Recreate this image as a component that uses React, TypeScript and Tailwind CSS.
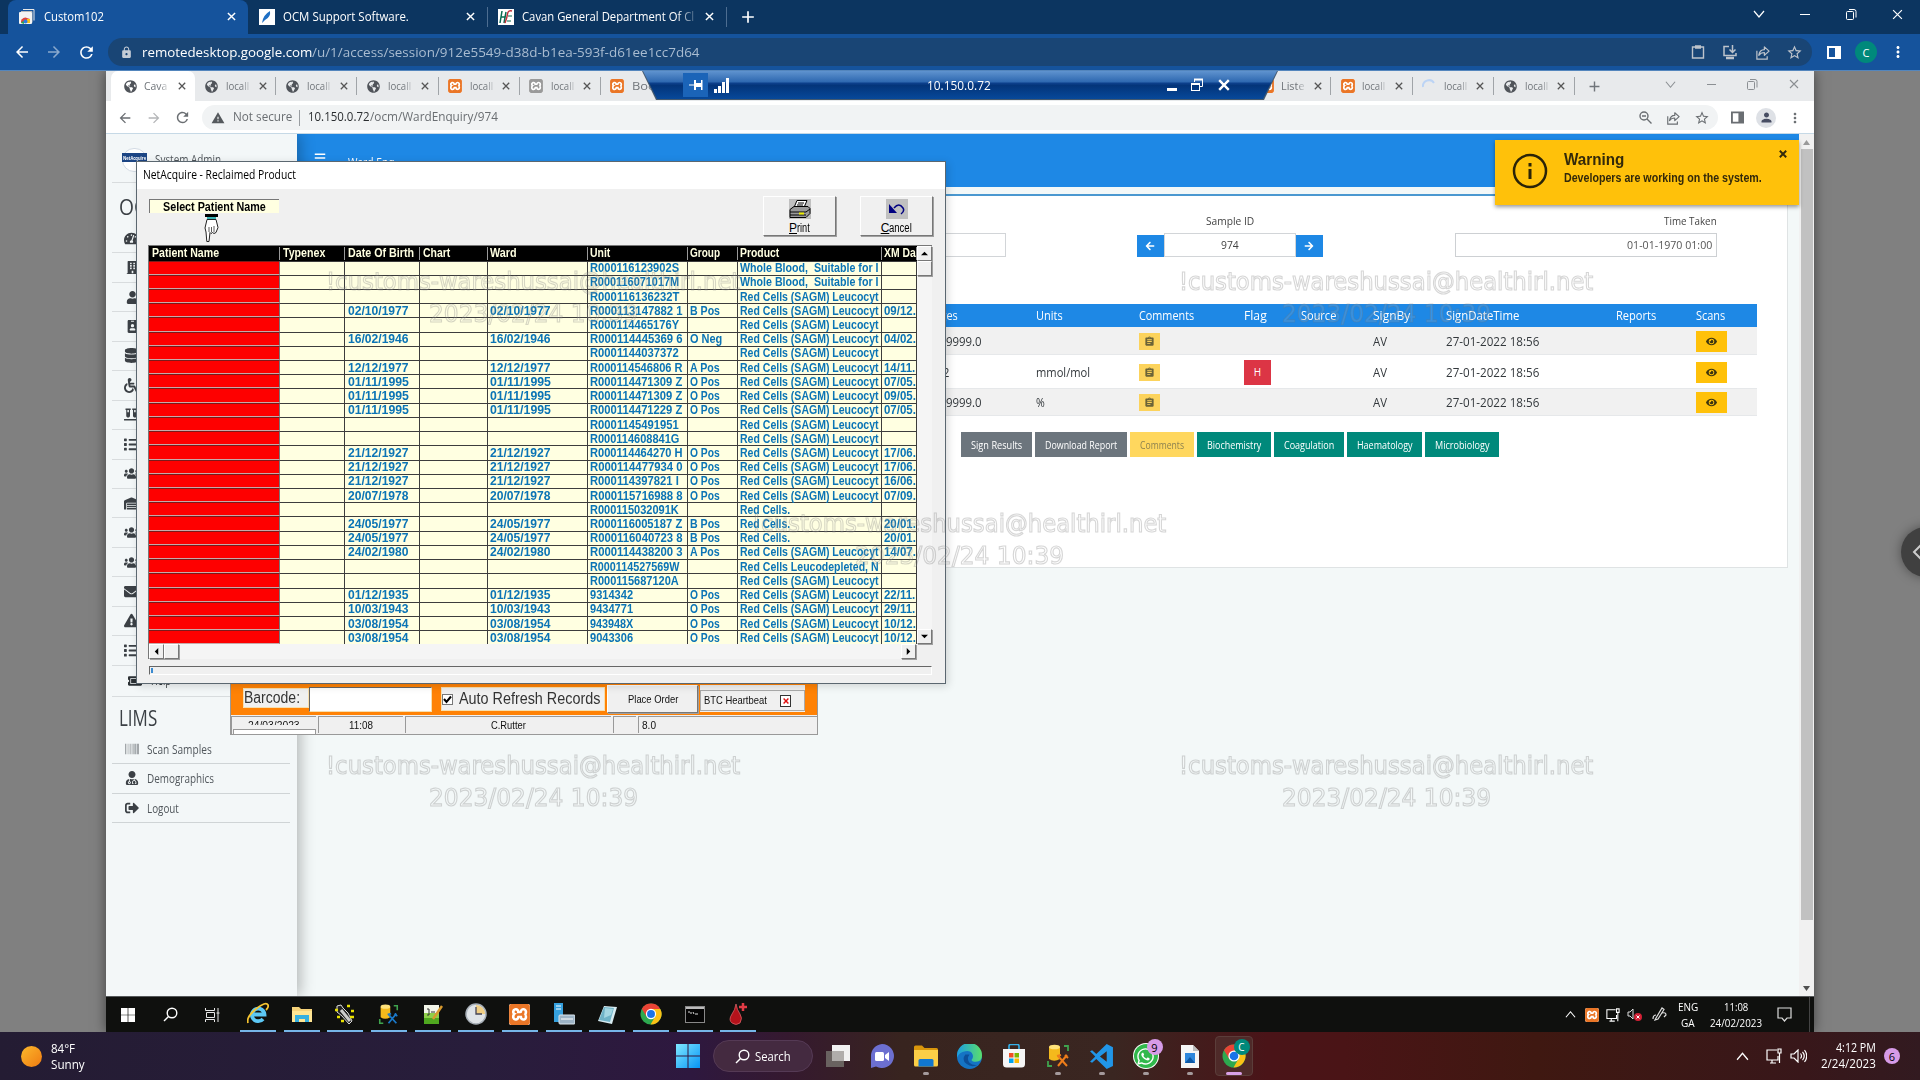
import React, { useLayoutEffect, useRef, useState } from "react";
import {
  FaArrowLeft, FaArrowRight, FaBarcode, FaBars, FaBuilding, FaDatabase, FaEnvelope, FaExclamationTriangle,
  FaEye, FaGlobeAmericas, FaIdBadge, FaList, FaSignOutAlt, FaTachometerAlt, FaUser, FaUserMd, FaUsers, FaVials, FaWarehouse,
  FaWheelchair, FaWhatsapp, FaTicketAlt,
} from "react-icons/fa";
import { MdAdd, MdArrowBack, MdArrowForward, MdAssignment, MdLock, MdMoreVert, MdPerson, MdRefresh, MdStarBorder, MdWarning } from "react-icons/md";
import { SiXampp } from "react-icons/si";

/** Text squeezed or stretched horizontally to an exact width. */
function Fit({ w, children, className = "" }: { w: number; children: string; className?: string }) {
  const ref = useRef<HTMLSpanElement>(null);
  const [k, setK] = useState(1);
  useLayoutEffect(() => {
    if (ref.current) setK(w / ref.current.offsetWidth);
  }, [w, children]);
  return (
    <span className={`inline-block shrink-0 ${className}`} style={{ width: w }}>
      <span ref={ref} className="inline-block origin-left whitespace-pre" style={{ transform: `scaleX(${k})` }}>
        {children}
      </span>
    </span>
  );
}

function Slot({ w, children, className = "" }: { w: number; children?: React.ReactNode; className?: string }) {
  return (
    <div className={`flex shrink-0 items-center justify-center ${className}`} style={{ width: w }}>
      {children}
    </div>
  );
}

/* ---------- small icons ---------- */
const Cross = ({ s = 9, c = "currentColor", sw = 1.6 }: { s?: number; c?: string; sw?: number }) => (
  <svg width={s} height={s} viewBox="0 0 10 10" fill="none" stroke={c} strokeWidth={sw}><path d="M1 1l8 8M9 1l-8 8" /></svg>
);
const Chevron = ({ up = false, s = 12 }: { up?: boolean; s?: number }) => (
  <svg width={s} height={s} viewBox="0 0 12 12" fill="none" stroke="currentColor" strokeWidth="1.2">
    <path d={up ? "M1 9l5-6 5 6" : "M1 3l5 6 5-6"} />
  </svg>
);
const Restore = () => (
  <svg width="11" height="11" viewBox="0 0 11 11" fill="none" stroke="currentColor"><rect x=".5" y="2.5" width="7" height="8" rx="1" /><path d="M3 .5h5q2 0 2 2v6" /></svg>
);
const ShareIcon = ({ s = 15 }: { s?: number }) => (
  <svg width={s} height={s} viewBox="0 0 16 16" fill="none" stroke="currentColor" strokeWidth="1.3">
    <path d="M2 6v9h11v-3" /><path d="M4 11q1-6 6-6V2l5 4.5-5 4.500V8q-4 0-6 3z" strokeLinejoin="round" />
  </svg>
);
const ClipIcon = () => (
  <svg width="14" height="16" viewBox="0 0 14 16" fill="none" stroke="currentColor" strokeWidth="1.4"><path d="M1.500 3h11v11h-11z" /><path d="M4 3h6" strokeWidth="3.500" /></svg>
);
const InstallIcon = () => (
  <svg width="16" height="16" viewBox="0 0 16 16" fill="none" stroke="currentColor" strokeWidth="1.5">
    <path d="M7 2.500H2v9h12V9" /><path d="M4 14h8" strokeWidth="2.500" /><path d="M10.500 1v7M7.500 5.500l3 3 3-3" />
  </svg>
);
const SidePanel = ({ w = 14 }: { w?: number }) => (
  <svg width={w} height="13" viewBox="0 0 14 13"><path fill="currentColor" fillRule="evenodd" d="M0 0h14v13H0zM2 2v9h6V2z" /></svg>
);
const ZoomOut = () => (
  <svg width="13" height="13" viewBox="0 0 13 13" fill="none" stroke="currentColor" strokeWidth="1.4"><circle cx="5" cy="5" r="4" /><path d="M8 8l4.500 4.500M3 5h4" /></svg>
);
const Xampp = ({ s = 14, gray = false }: { s?: number; gray?: boolean }) => (
  <span className={`flex items-center justify-center overflow-hidden rounded-[2px] bg-white ${gray ? "text-[#9a9a9a]" : "text-[#ea7627]"}`} style={{ width: s, height: s }}>
    <SiXampp size={s} className="shrink-0" />
  </span>
);
const WinLogo = ({ s, c }: { s: number; c: string }) => (
  <svg width={s} height={s} viewBox="0 0 20 20" fill={c}><path d="M0 0h9.500v9.500H0zM10.500 0H20v9.500h-9.500zM0 10.500h9.500V20H0zM10.500 10.500H20V20h-9.500z" /></svg>
);
const Search = ({ s = 15 }: { s?: number }) => (
  <svg width={s} height={s} viewBox="0 0 15 15" fill="none" stroke="#fff" strokeWidth="1.400"><circle cx="9" cy="6" r="4.800" /><path d="M5.500 9.500L1 14" /></svg>
);
const ChromeLogo = ({ s }: { s: number }) => (
  <svg width={s} height={s} viewBox="0 0 24 24">
    <circle cx="12" cy="12" r="11.500" fill="#2da94f" />
    <path d="M12 12L2 6.300A11.500 11.500 0 0 1 22 6.300z" fill="#ea4335" />
    <path d="M12 6.500h10.100A11.500 11.500 0 0 1 11.500 23.500L17 14z" fill="#fbc116" />
    <path d="M2 6.200l5.200 8.700L12 6.500z" fill="#ea4335" />
    <circle cx="12" cy="12" r="5.600" fill="#fff" /><circle cx="12" cy="12" r="4.300" fill="#1a73e8" />
  </svg>
);
const Folder = ({ s }: { s: number }) => (
  <svg width={s} height={s} viewBox="0 0 24 24">
    <path d="M0 3q0-1.500 1.500-1.500H8L10.500 4H22.500Q24 4 24 5.500V21H0z" fill="#d9960c" /><path d="M0 6h24v15q0 1.500-1.500 1.500h-21Q0 22.500 0 21z" fill="#fbcf47" />
    <path d="M4.500 22.500v-6q0-1.500 1.500-1.500h12q1.500 0 1.500 1.500v6z" fill="#1177cf" />
  </svg>
);
const RemoteFolder = () => (
  <svg width="20" height="20" viewBox="0 0 20 20"><path d="M0 3h7l2 2h11v13H0z" fill="#f6d37a" /><path d="M0 7h20v11H0z" fill="#ffe694" /><path d="M3 18v-7h14v7h-4v-3H7v3z" fill="#35b0e0" /></svg>
);
const DbTool = ({ s, tool }: { s: number; tool: string }) => (
  <svg width={s} height={s} viewBox="0 0 22 24" fill="none">
    <path d="M17 2h4v5M1 17v5h4" stroke="#3fa34d" strokeWidth="1.800" />
    <path d="M2 3v12q5 3.500 11 0V3z" fill="#f4b91c" /><ellipse cx="7.500" cy="3" rx="5.500" ry="2.300" fill="#ffe27a" />
    <path d="M11 12l9 10M20 11l-9 11M10 12l4-1M18 11l3 3" stroke={tool} strokeWidth="2" />
  </svg>
);
const Speaker = () => (
  <svg width="17" height="14" viewBox="0 0 17 14" fill="none" stroke="#fff" strokeWidth="1.200"><path d="M1 5h3l4-4v12L4 9H1z" /><path d="M10.500 4.500q2 2.500 0 5M12.500 2.800q3.500 4.200 0 8.400M14.500 1q4.500 6 0 12" /></svg>
);
const Monitor = ({ s = 16 }: { s?: number }) => (
  <svg width={s} height={s} viewBox="0 0 16 16" fill="none" stroke="#fff" strokeWidth="1.200"><path d="M11 2H1v10h11V8M4 15h6M6 12v3" /><path d="M12 1h3v4h-3zM13.500 5v10" /></svg>
);

/* ---------- outer browser ---------- */
function OuterTabs() {
  return (
    <div className="flex h-[34px] shrink-0 bg-[#0c3560] pl-2 text-[12px] leading-none text-white">
      <div className="flex h-[34px] w-[240px] items-center rounded-t-[8px] bg-[#15539c] pb-[1px]">
        <Slot w={38}>
          <svg width="16" height="15" viewBox="0 0 16 15"><path d="M4 .5h11v11" fill="none" stroke="#e8e8e8" /><path d="M2 2.500h11v11" fill="none" stroke="#bbb" /><rect x="0" y="3" width="13" height="12" rx="1" fill="#f4f4f4" /><path d="M2 14a4.500 4.500 0 0 1 4.500-5.500L11 10z" fill="#e2453b" /><path d="M2 14q1-2 3-2v3z" fill="#2da94f" /><path d="M8 10h3v4H8z" fill="#fbc116" /><circle cx="6.500" cy="12.500" r="2" fill="#2f7de1" /></svg>
        </Slot>
        <Fit w={60} className="-ml-[2px]">Custom102</Fit>
        <div className="ml-auto flex w-[33px] justify-center"><Cross /></div>
      </div>
      <div className="flex w-[239px] items-center pb-[1px]">
        <span className="ml-[11px] flex h-4 w-4 items-center justify-center bg-white">
          <svg width="12" height="13" viewBox="0 0 12 13"><path d="M1 13Q2 5 9 1q1 6-5 9z" fill="#1e6fc4" /></svg>
        </span>
        <Fit w={126} className="ml-2">OCM Support Software.</Fit>
        <div className="ml-auto flex w-[33px] justify-center"><Cross /></div>
      </div>
      <div className="flex w-[239px] items-center pb-[1px]">
        <div className="h-5 w-px bg-[#4d6d91]" />
        <span className="ml-[10px] flex h-4 w-4 items-center justify-center bg-white">
          <svg width="16" height="16" viewBox="0 0 16 16" fill="none"><path d="M4 2L2 14M8 3L6 14M3 8h4" stroke="#0a6b50" strokeWidth="1.500" /><path d="M14 2q-4-1-4.500 3T7 14" stroke="#c22f3a" strokeWidth="1.500" /><path d="M10 7h4M9 12h4" stroke="#0a6b50" strokeWidth="1.200" /></svg>
        </span>
        <div className="ml-2 w-[176px] overflow-hidden [mask-image:linear-gradient(to_right,black_90%,rgba(0,0,0,0.25))]"><Fit w={175}>Cavan General Department Of Cli</Fit></div>
        <div className="ml-auto flex w-[33px] justify-center"><Cross /></div>
      </div>
      <div className="flex items-center pb-[1px]">
        <div className="h-5 w-px bg-[#4d6d91]" />
        <MdAdd className="ml-[11px]" size={20} />
      </div>
      <div className="ml-auto flex pb-[6px]">
        <Slot w={46}><Chevron /></Slot>
        <Slot w={46}><div className="h-px w-[10px] bg-white" /></Slot>
        <Slot w={46}><Restore /></Slot>
        <Slot w={46}><Cross s={11} sw={1.1} /></Slot>
      </div>
    </div>
  );
}

function OuterToolbar() {
  return (
    <div className="flex h-[37px] shrink-0 items-center border-b border-[#5486bd] bg-[#15539c] pl-[6px] text-[13px] leading-none text-white">
      <Slot w={32}><MdArrowBack size={18} /></Slot>
      <Slot w={32}><MdArrowForward size={18} className="opacity-50" /></Slot>
      <Slot w={32}><MdRefresh size={19} /></Slot>
      <div className="ml-[6px] flex h-7 w-[1704px] items-center rounded-full bg-[#194575] pl-[12px] text-[#a9bcd1]">
        <MdLock size={13} className="mr-[9px] text-[#c4ccd6]" />
        <Fit w={170} className="text-white">remotedesktop.google.com</Fit>
        <Fit w={388}>/u/1/access/session/912e5549-d38d-b1ea-593f-d61ee1cc7d64</Fit>
        <div className="ml-auto mr-[2px] flex text-[#bdc3cb]">
          <Slot w={32}><ClipIcon /></Slot>
          <Slot w={32}><InstallIcon /></Slot>
          <Slot w={32}><ShareIcon /></Slot>
          <Slot w={32}><MdStarBorder size={17} /></Slot>
        </div>
      </div>
      <Slot w={44}><SidePanel /></Slot>
      <Slot w={20}><span className="flex h-[22px] w-[22px] shrink-0 items-center justify-center rounded-full bg-[#00897b] text-[11px]">C</span></Slot>
      <Slot w={44}><MdMoreVert size={18} /></Slot>
    </div>
  );
}

/* ---------- remote browser ---------- */
type TabKind = "globe" | "xampp" | "gray" | "spin";
function RemoteTab({ kind, title, active = false }: { kind: TabKind; title: string; active?: boolean }) {
  return (
    <div className={`flex h-[30px] shrink-0 items-center ${active ? "w-[84px] rounded-t-[7px] bg-white" : "w-[81.2px]"}`}>
      <Slot w={active ? 38 : 33}>
        {kind === "globe" && <FaGlobeAmericas size={13} className="text-[#50545a]" />}
        {kind === "xampp" && <Xampp />}
        {kind === "gray" && <Xampp gray />}
        {kind === "spin" && <svg width="14" height="14" viewBox="0 0 14 14" fill="none" stroke="#bcd4f5" strokeWidth="2"><path d="M1 8a6 6 0 0 1 11-4" /></svg>}
      </Slot>
      <div className={`w-6 shrink-0 overflow-hidden [mask-image:linear-gradient(to_right,black_65%,rgba(0,0,0,0.2))] ${active ? "-ml-[5px]" : "-ml-[2px]"}`}>
        <Fit w={23.500}>{title}</Fit>
      </div>
      <div className="flex flex-1 justify-center text-[#555]"><Cross s={8} /></div>
      {!active && <div className="h-[18px] w-px bg-[#a0a4a8]" />}
    </div>
  );
}

function RdpBar() {
  return (
    <div className="absolute left-[536px] top-0 h-[29px] w-[636px] bg-[#44596f] [clip-path:polygon(0_0,100%_0,622px_100%,14px_100%)]">
      <div className="flex h-[28px] items-center bg-[linear-gradient(#5f93cf_0%,#2f69b1_38%,#0c3f8b_44%,#033479_52%,#07489a_100%)] text-white [clip-path:polygon(1px_0,635px_0,621px_100%,15px_100%)]">
        <div className="ml-[41px] flex h-6 w-[25px] items-center justify-center bg-[#1b64b8]">
          <svg width="14" height="12" viewBox="0 0 14 12"><path d="M0 5.500h5v1H0zM5 1h2v3h5V1h1.500v10H12V8H7v3H5z" fill="#fff" /></svg>
        </div>
        <svg className="ml-[6px]" width="15" height="15" viewBox="0 0 15 15" fill="#fff"><path d="M0 11h3v4H0zM4 8h3v7H4zM8 4h3v11H8zM12 0h3v15h-3z" /></svg>
        <Fit w={64} className="ml-[198px] text-[13px] leading-none">10.150.0.72</Fit>
        <div className="ml-[176px] mt-[9px] h-[3px] w-[10px] bg-white" />
        <svg className="ml-[14px]" width="12" height="14" viewBox="0 0 12 14" fill="none" stroke="#fff"><path d="M3.500 4V1.500h8v7H9" /><path d="M3 1.500h9" strokeWidth="2" /><rect x=".5" y="5.500" width="8" height="7" /><path d="M0 6h9" strokeWidth="2" /></svg>
        <div className="ml-[15px]"><Cross s={12} sw={2} /></div>
      </div>
    </div>
  );
}

function RemoteChrome() {
  return (
    <>
      <div className="relative flex h-[30px] shrink-0 items-center bg-[#e8eaec] pl-[5px] text-[11.500px] leading-none text-[#70757a]">
        <RemoteTab kind="globe" title="Cava" active />
        <RemoteTab kind="globe" title="locall" />
        <RemoteTab kind="globe" title="locall" />
        <RemoteTab kind="globe" title="locall" />
        <RemoteTab kind="xampp" title="locall" />
        <RemoteTab kind="gray" title="locall" />
        <RemoteTab kind="xampp" title="Boo" />
        <div className="w-[568px] shrink-0" />
        <RemoteTab kind="xampp" title="Liste" />
        <RemoteTab kind="xampp" title="locall" />
        <RemoteTab kind="spin" title="locall" />
        <RemoteTab kind="globe" title="locall" />
        <Slot w={40}><MdAdd size={17} /></Slot>
        <div className="mb-1 ml-auto flex text-[#8b8f93]">
          <Slot w={41}><Chevron s={11} /></Slot>
          <Slot w={41}><div className="h-px w-[9px] bg-[#8b8f93]" /></Slot>
          <Slot w={41}><Restore /></Slot>
          <Slot w={41}><Cross s={10} sw={1.1} /></Slot>
        </div>
        <RdpBar />
      </div>
      <div className="flex h-[33px] shrink-0 items-center border-b border-[#c6d9e6] bg-white pl-[5px] pt-px text-[12.500px] leading-none text-[#6a6e72]">
        <Slot w={28}><MdArrowBack size={16} /></Slot>
        <Slot w={29}><MdArrowForward size={16} className="opacity-50" /></Slot>
        <Slot w={29}><MdRefresh size={17} /></Slot>
        <div className="ml-[5px] flex h-[25px] w-[1516px] items-center rounded-full bg-[#f1f3f4] pl-[9px]">
          <MdWarning size={14} className="text-[#55595d]" />
          <Fit w={59} className="ml-2">Not secure</Fit>
          <div className="ml-[7px] h-4 w-px bg-[#9a9ea2]" />
          <Fit w={61.5} className="ml-[8px] text-[#2a2d30]">10.150.0.72</Fit>
          <Fit w={128}>/ocm/WardEnquiry/974</Fit>
          <div className="ml-auto mr-[2px] flex">
            <Slot w={28}><ZoomOut /></Slot>
            <Slot w={28.500}><ShareIcon s={14} /></Slot>
            <Slot w={28.500}><MdStarBorder size={16} /></Slot>
          </div>
        </div>
        <Slot w={38}><SidePanel w={13} /></Slot>
        <Slot w={20}><span className="flex h-5 w-5 items-center justify-center rounded-full bg-[#dee1e6] text-[#474d63]"><MdPerson size={15} /></span></Slot>
        <Slot w={38}><MdMoreVert size={16} /></Slot>
      </div>
    </>
  );
}

/* ---------- sidebar ---------- */
const MENU = [
  FaTachometerAlt, FaBuilding, FaUser, FaIdBadge, FaDatabase, FaWheelchair, FaVials, FaList, FaUsers,
  FaWarehouse, FaUsers, FaUsers, FaEnvelope, FaExclamationTriangle, FaList,
];

function Sidebar() {
  const lims: [React.ComponentType<{ size?: number; className?: string }>, string, number][] = [
    [FaBarcode, "Scan Samples", 65], [FaUserMd, "Demographics", 67], [FaSignOutAlt, "Logout", 32],
  ];
  return (
    <div className="z-10 flex w-[191px] shrink-0 flex-col bg-[#f3f7f8] pl-[6px] text-[12px] leading-none text-[#51575c] shadow-[3px_0_14px_rgba(0,0,0,0.28)]">
      <div className="flex h-[49px] w-[178px] items-start border-b border-[#d8dcde] pt-[13px]">
        <div className="ml-[10px] mt-[1px] flex h-6 w-[25px] flex-col items-center rounded-full border border-[#d3dbe4] bg-white">
          <div className="mt-[4px] flex h-[9px] w-[25px] items-center bg-[#1c4584] pl-px text-[6px] font-bold text-white"><Fit w={23}>NetAcquire</Fit></div>
        </div>
        <Fit w={66} className="ml-2 mt-[6.500px]">System Admin</Fit>
      </div>
      <div className="flex h-[41px] items-center pb-0 pl-[7px] pt-[7px] text-[21px] text-[#3b4045]"><Fit w={44}>OCM</Fit></div>
      {MENU.map((I, i) => (
        <div key={i} className="flex h-[29.450px] w-[178px] items-center border-b border-[#d8dcde] pl-[12px] text-[#3b4045]">
          <I size={i === 1 || i === 2 || i === 3 ? 13 : 15} className={i === 1 || i === 2 || i === 3 ? "ml-[2px]" : ""} />
        </div>
      ))}
      <div className="flex h-[31px] w-[178px] shrink-0 items-center border-b border-[#d8dcde] pl-[16px] text-[#2b3034]">
        <FaTicketAlt size={14} /><Fit w={20} className="ml-[9px]">Help</Fit>
      </div>
      <div className="flex h-[38px] items-center pl-[7px] pt-[6px] text-[21px] text-[#3b4045]"><Fit w={38}>LIMS</Fit></div>
      {lims.map(([I, t, w]) => (
        <div key={t} className="flex h-[29.500px] w-[178px] items-center border-b border-[#cfd4d6]">
          <Slot w={40}><I size={14} className={t === "Scan Samples" ? "text-[#858a8e]" : "text-[#3b4045]"} /></Slot>
          <Fit w={w} className="-ml-[5px] mt-[2px]">{t}</Fit>
        </div>
      ))}
    </div>
  );
}

/* ---------- ward enquiry page ---------- */
const COLS: [string, number][] = [
  ["Ranges", 37], ["Units", 27], ["Comments", 55], ["Flag", 22.5], ["Source", 35.5], ["SignBy", 37], ["SignDateTime", 73.5], ["Reports", 40], ["Scans", 29.5],
];
const RESULTS: { range: string; rw: number; pad: string; unit: string; uw: number; flag?: boolean; h: string; bg: string }[] = [
  { range: "9999.0", rw: 36, pad: "pl-[625.5px]", unit: "", uw: 0, h: "h-[28px]", bg: "bg-[#f1f1f1]" },
  { range: "2", rw: 6, pad: "pl-[623px]", unit: "mmol/mol", uw: 54, flag: true, h: "h-[34px]", bg: "bg-white" },
  { range: "9999.0", rw: 36, pad: "pl-[625.5px]", unit: "%", uw: 9, h: "h-[27px]", bg: "bg-[#f1f1f1]" },
];
const GRID = "grid grid-cols-[716px_103px_105px_57px_72px_73px_170px_80px_61px] items-center";

function WardPage() {
  const buttons: [string, number, number, string][] = [
    ["Sign Results", 71, 51, "bg-[#6c757d] text-white"], ["Download Report", 92, 72.5, "bg-[#6c757d] text-white"],
    ["Comments", 64, 44, "bg-[#ffd75e] text-[#8d8250]"], ["Biochemistry", 74, 54.5, "bg-[#00897b] text-white"],
    ["Coagulation", 70, 50, "bg-[#00897b] text-white"], ["Haematology", 75, 55.5, "bg-[#00897b] text-white"],
    ["Microbiology", 74, 54.5, "bg-[#00897b] text-white"],
  ];
  return (
    <div className="flex min-w-0 flex-1 flex-col bg-[#f3f8f8] leading-none">
      <div className="flex h-[53px] shrink-0 bg-[#1e88e5] pl-[17px] pt-[18px] text-white">
        <FaBars size={12} /><Fit w={46} className="ml-[22px] mt-[4.500px] text-[12px]">Ward Enq</Fit>
      </div>
      <div className="mr-[11px] mt-[7px] h-[374px] shrink-0 border-b border-r border-t-2 border-b-[#dfe3e4] border-r-[#dfe3e4] border-t-[#4a98d0] bg-white pl-[23px]">
        <div className="flex h-[63px] pt-[15px] text-[11.500px] text-[#444]">
          <div className="mt-[22px] h-6 w-[685.500px] border border-[#d2d5d8]" />
          <div className="ml-[131px] flex w-[186px] flex-col items-center">
            <div className="flex h-[19px] items-center"><Fit w={48}>Sample ID</Fit></div>
            <div className="mt-[3px] flex items-end">
              <div className="flex h-[22px] w-[27px] items-center justify-center bg-[#1e88e5] text-white"><FaArrowLeft size={10} /></div>
              <div className="flex h-6 w-[132px] items-center justify-center border border-[#d2d5d8]"><Fit w={18}>974</Fit></div>
              <div className="flex h-[22px] w-[27px] items-center justify-center bg-[#1e88e5] text-white"><FaArrowRight size={10} /></div>
            </div>
          </div>
          <div className="ml-[132px] flex w-[262.500px] flex-col items-end">
            <div className="flex h-[19px] items-center"><Fit w={53}>Time Taken</Fit></div>
            <div className="mt-[3px] flex h-6 w-full items-center justify-end border border-[#cdd0d3] pr-[4px] text-[#555]"><Fit w={85}>01-01-1970 01:00</Fit></div>
          </div>
        </div>
        <div className="mt-[45px] w-[1437px] text-[13px] text-[#33383c]">
          <div className={`${GRID} h-[23px] bg-[#1e88e5] text-white`}>
            {COLS.map(([t, w], i) => <div key={t} className={i === 0 ? "pl-[601px]" : ""}><Fit w={w}>{t}</Fit></div>)}
          </div>
          {RESULTS.map((r, i) => (
            <div key={i} className={`${GRID} border-b border-[#e6e8ea] pt-[1.500px] ${r.h} ${r.bg}`}>
              <div className={r.pad}><Fit w={r.rw}>{r.range}</Fit></div>
              <div>{r.unit && <Fit w={r.uw}>{r.unit}</Fit>}</div>
              <div><span className="flex h-[17px] w-[21px] items-center justify-center bg-[#fcd35c] text-[#6b6337]"><MdAssignment size={11} /></span></div>
              <div>{r.flag && <span className="flex h-[25px] w-[27px] items-center justify-center bg-[#dc3545] text-[10px] text-white">H</span>}</div>
              <div />
              <div><Fit w={14}>AV</Fit></div>
              <div><Fit w={93}>27-01-2022 18:56</Fit></div>
              <div />
              <div><span className="flex h-[21px] w-[31px] items-center justify-center bg-[#ffc10a] text-[#3b3410]"><FaEye size={11} /></span></div>
            </div>
          ))}
        </div>
        <div className="ml-[641px] mt-[16px] flex gap-[3px] text-[11px]">
          {buttons.map(([t, w, tw, c]) => (
            <div key={t} className={`flex h-[25px] shrink-0 items-center justify-center ${c}`} style={{ width: w }}><Fit w={tw}>{t}</Fit></div>
          ))}
        </div>
      </div>
    </div>
  );
}

function Toast() {
  return (
    <div className="absolute left-[1389px] top-[68.500px] z-20 flex h-[65px] w-[304px] bg-[#ffc10a] font-['Liberation_Sans'] font-bold leading-none text-[#33290a] shadow-[0_2px_4px_rgba(0,0,0,0.4)]">
      <svg className="ml-[17px] mt-[13.500px]" width="36" height="36" viewBox="0 0 36 36" fill="none" stroke="#2b2408" strokeWidth="2.500"><circle cx="18" cy="18" r="16" /><path d="M18 16v10M18 10v3.500" strokeWidth="3" /></svg>
      <div className="ml-[16px] pt-[12px]">
        <div className="text-[16px]"><Fit w={60}>Warning</Fit></div>
        <div className="mt-[4px] text-[12px]"><Fit w={198}>Developers are working on the system.</Fit></div>
      </div>
      <div className="ml-[17px] mt-[10px]"><Cross s={8} sw={2.400} /></div>
    </div>
  );
}

/* ---------- legacy dialog ---------- */
type Row = [string, string, string, string, string];
const S = "Red Cells (SAGM) Leucocyt";
const ROWS: Row[] = [
  ["", "R000116123902S", "", "Whole Blood,  Suitable for I", ""],
  ["", "R000116071017M", "", "Whole Blood,  Suitable for I", ""],
  ["", "R000116136232T", "", S, ""],
  ["02/10/1977", "R000113147882 1", "B Pos", S, "09/12."],
  ["", "R000114465176Y", "", S, ""],
  ["16/02/1946", "R000114445369 6", "O Neg", S, "04/02."],
  ["", "R0001144037372", "", S, ""],
  ["12/12/1977", "R000114546806 R", "A Pos", S, "14/11."],
  ["01/11/1995", "R000114471309 Z", "O Pos", S, "07/05."],
  ["01/11/1995", "R000114471309 Z", "O Pos", S, "09/05."],
  ["01/11/1995", "R000114471229 Z", "O Pos", S, "07/05."],
  ["", "R0001145491951", "", S, ""],
  ["", "R000114608841G", "", S, ""],
  ["21/12/1927", "R000114464270 H", "O Pos", S, "17/06."],
  ["21/12/1927", "R000114477934 0", "O Pos", S, "17/06."],
  ["21/12/1927", "R000114397821 I", "O Pos", S, "16/06."],
  ["20/07/1978", "R000115716988 8", "O Pos", S, "07/09."],
  ["", "R000115032091K", "", "Red Cells.", ""],
  ["24/05/1977", "R000116005187 Z", "B Pos", "Red Cells.", "20/01."],
  ["24/05/1977", "R000116040723 8", "B Pos", "Red Cells.", "20/01."],
  ["24/02/1980", "R000114438200 3", "A Pos", S, "14/07."],
  ["", "R000114527569W", "", "Red Cells Leucodepleted, N", ""],
  ["", "R000115687120A", "", S, ""],
  ["01/12/1935", "9314342", "O Pos", S, "22/11."],
  ["10/03/1943", "9434771", "O Pos", S, "29/11."],
  ["03/08/1954", "943948X", "O Pos", S, "10/12."],
  ["03/08/1954", "9043306", "O Pos", S, "10/12."],
];
const HEAD: [string, number][] = [
  ["Patient Name", 67], ["Typenex", 42.5], ["Date Of Birth", 66], ["Chart", 27], ["Ward", 27], ["Unit", 20], ["Group", 30], ["Product", 39], ["XM Da", 32],
];
const DG = "grid grid-cols-[131px_65px_75px_67.5px_100px_100.3px_50px_144px_35px]";
const productWidth = (t: string) => (t === "Red Cells." ? 50 : 138.5);
const unitWidth = (t: string) => (t.length === 7 ? 43.3 : t.length === 14 ? 89 : t.endsWith("I") ? 89 : 92.5);

const BEVEL = "border border-t-white border-l-white border-b-[#777] border-r-[#777] bg-[#f0f0f0] shadow-[1px_1px_0_#a0a0a0]";

function ScrollBtn({ d, className = "" }: { d?: string; className?: string }) {
  return (
    <div className={`flex h-[15px] w-[15px] shrink-0 items-center justify-center ${BEVEL} ${className}`}>
      {d && <svg width="7" height="7" viewBox="0 0 8 8"><path d={d} /></svg>}
    </div>
  );
}

function Dialog() {
  return (
    <div className="absolute left-[30px] top-[90px] z-30 flex h-[523px] w-[810px] flex-col border border-[#5b6770] bg-[#f0f0f0] leading-none text-black shadow-[2px_2px_8px_rgba(0,0,0,0.15)]">
      <div className="flex h-[27px] shrink-0 items-center bg-white pb-px pl-[6px] text-[12px]"><Fit w={153}>NetAcquire - Reclaimed Product</Fit></div>
      <div className="flex h-[55.500px] shrink-0 pl-[12px] pt-[7px] font-['Liberation_Sans'] text-[12px]">
        <div className="flex flex-col pt-[3px]">
          <div className="flex h-[14px] w-[130px] items-center justify-center border-l border-t border-[#777] bg-[#ffffe1] pr-px font-bold"><Fit w={103}>Select Patient Name</Fit></div>
          <svg className="ml-[55px] mt-px" width="16" height="29" viewBox="0 0 16 29">
            <path d="M1 0h13v3H1z" /><path d="M3 3h9v2H3z" fill="#39b5b5" />
            <path d="M3 5.500h9l2 8-2 5-2 1-1.500-1-1.500 1-1-1-1 9H2.800L2 18 1 14z" fill="#fff" stroke="#222" /><path d="M5 13v5M7.500 13v5M10 12v6" stroke="#333" strokeWidth=".8" />
          </svg>
        </div>
        <div className={`ml-[484px] flex h-10 w-[73px] flex-col items-center ${BEVEL} pt-[2px]`}>
          <div className="flex h-[20px] w-[22px] items-center justify-center bg-[#c0c0c0]">
            <svg width="22" height="20" viewBox="0 0 22 20" stroke="#000"><path d="M8 1.500h10l-3 7H5z" fill="#fff" /><path d="M9 4h6M8 6h6" /><path d="M1 10.500l4-3h14l2 2v5l-4 4H1z" fill="#9a9a9a" /><path d="M1 13h16l4-3M1 16h16" fill="none" /><path d="M10 14.500h5" stroke="#ee0" strokeWidth="2" /></svg>
          </div>
          <span className="mt-[3px]"><u>P</u><Fit w={13}>rint</Fit></span>
        </div>
        <div className={`ml-[24px] flex h-10 w-[73px] flex-col items-center ${BEVEL} pt-[2px]`}>
          <div className="flex h-[20px] w-[22px] items-center justify-center bg-[#c0c0c0]">
            <svg width="16" height="12" viewBox="0 0 16 12" fill="none"><path d="M5 5q5-6 9 0 2 3-2 6" stroke="#000080" strokeWidth="1.500" /><path d="M0 1v9h8z" fill="#000080" /></svg>
          </div>
          <span className="mt-[3px]"><u>C</u><Fit w={23}>ancel</Fit></span>
        </div>
      </div>

      <div className="ml-[11px] flex h-[414px] w-[784px] shrink-0 flex-wrap content-start border-l border-t border-[#777] font-['Liberation_Sans'] text-[12px] font-bold">
        <div className="h-[398px] w-[767.800px] overflow-hidden border-t border-black">
          <div className={`${DG} h-[14px] bg-black pb-px text-[#ffffe1]`}>
            {HEAD.map(([t, w]) => (
              <div key={t} className="flex items-center border-r border-[#999] pl-[2.500px]"><Fit w={w}>{t}</Fit></div>
            ))}
          </div>
          {ROWS.map((r, i) => (
            <div key={i} className={`${DG} h-[14.220px] text-[#0b74b5]`}>
              {["red", "", r[0], "", r[0], r[1], r[2], r[3], r[4]].map((t, c) =>
                c === 0 ? (
                  <div key={c} className="border-b border-r border-t border-b-[#c9a9a9] border-r-[#777] border-t-[#7b1a1a] bg-[#fe0000]" />
                ) : (
                  <div key={c} className="flex items-center border-r border-t border-r-[#3c3c3c] border-t-[#3c3c3c] bg-[#ffffe1] pl-[2.500px]">
                    {t && (
                      <Fit w={c === 2 || c === 4 ? 60.5 : c === 5 ? unitWidth(t) : c === 6 ? (t === "O Neg" ? 32 : 30) : c === 7 ? productWidth(t) : 31.5}>{t}</Fit>
                    )}
                  </div>
                ),
              )}
            </div>
          ))}
        </div>
        <div className="flex h-[398px] w-[15px] flex-col bg-[#f5f5f5]">
          <ScrollBtn d="M0 6l4-4 4 4z" /><ScrollBtn /><div className="flex-1" /><ScrollBtn d="M0 2l4 4 4-4z" />
        </div>
        <div className="flex h-[15px] w-[767px] bg-[#f5f5f5]">
          <ScrollBtn d="M6 0L2 4l4 4z" /><ScrollBtn /><div className="flex-1" /><ScrollBtn d="M2 0l4 4-4 4z" />
        </div>
      </div>
      <div className="ml-[12px] mt-[7px] h-[9px] w-[783px] shrink-0 border border-b-white border-l-[#666] border-r-white border-t-[#666] pl-px pt-px"><div className="h-[5px] w-[2px] bg-[#3a8ad0]" /></div>
    </div>
  );
}

function OrangeWindow() {
  const cell = "flex h-[17px] shrink-0 items-center justify-center border-l border-t border-[#999] bg-[#f0f0f0] pt-[2px]";
  return (
    <div className="absolute left-[124px] top-[612px] z-20 flex h-[52px] w-[588px] flex-col border border-t-0 border-[#999] bg-[#f0f0f0] font-['Liberation_Sans'] leading-none text-[#111]">
      <div className="flex h-[32px] items-start bg-[#ff8205] pl-[12px]">
        <div className="mt-[5px] flex h-[20px] w-[66px] items-center border border-[#f7dfae] bg-[#f0f0f0] text-[16px] text-[#333]"><Fit w={56}>Barcode:</Fit></div>
        <div className="mt-[4px] h-[25px] w-[123px] border border-b-[#f7dfae] border-l-[#666] border-r-[#f7dfae] border-t-[#666] bg-white" />
        <div className="ml-[9px] mt-[4px] flex h-[24px] w-[164px] items-center border border-[#f7dfae] bg-[#f0f0f0] text-[16px] text-[#333]">
          <span className="flex h-[11px] w-[11px] items-center justify-center border border-[#777] bg-white"><svg width="9" height="9" viewBox="0 0 9 9" fill="none" stroke="#000" strokeWidth="2"><path d="M1 4l2.500 3L8 1.500" /></svg></span>
          <Fit w={141} className="ml-[6px]">Auto Refresh Records</Fit>
        </div>
        <div className={`ml-[2px] mt-[2px] flex h-[28px] w-[91px] items-center justify-center pt-px text-[11.500px] ${BEVEL}`}><Fit w={50}>Place Order</Fit></div>
        <div className="ml-[2px] mt-[2px] h-[27px] w-[105px] bg-[#f0f0f0] pt-[5px]">
          <div className="flex h-[21px] items-center border border-[#aaa] pl-[3px] text-[11.500px]">
            <Fit w={63}>BTC Heartbeat</Fit>
            <span className="ml-[13px] flex h-[12px] w-[11px] items-center justify-center border border-[#333] bg-white text-[#e01010]"><Cross s={6} sw={2.400} /></span>
          </div>
        </div>
      </div>
      <div className="flex h-[19px] gap-[2px] pt-[1px] text-[11.500px]">
        <div className="flex w-[85px] flex-col justify-between border-l border-t border-[#999]">
          <div className="flex h-[8px] items-start justify-center overflow-hidden pt-[3px]"><Fit w={52}>24/03/2023</Fit></div>
          <div className="ml-px h-[5px] border border-b-0 border-[#999] bg-white" />
        </div>
        <div className={`${cell} w-[85px]`}><Fit w={24}>11:08</Fit></div>
        <div className={`${cell} w-[206px]`}><Fit w={35}>C.Rutter</Fit></div>
        <div className={`${cell} w-[23px]`} />
        <div className={`${cell} flex-1 !justify-start pl-[3px]`}><Fit w={14}>8.0</Fit></div>
      </div>
    </div>
  );
}

function Watermark({ className }: { className: string }) {
  return (
    <div className={`pointer-events-none absolute z-40 flex w-[414px] flex-col items-center gap-[7px] font-['DejaVu_Sans'] text-[25px] font-normal leading-[25px] text-[rgba(255,255,255,0.1)] [-webkit-text-stroke:1.200px_rgba(120,120,120,0.3)] ${className}`}>
      <Fit w={414}>!customs-wareshussai@healthirl.net</Fit>
      <Fit w={209}>2023/02/24 10:39</Fit>
    </div>
  );
}

/* ---------- remote taskbar ---------- */
const REMOTE_APPS: React.ReactNode[] = [
  <svg width="22" height="24" viewBox="0 0 22 22" fill="none"><path d="M5 11.500h12.500a6.300 6.300 0 1 0-1.500 4.500" stroke="#5cc8f5" strokeWidth="3.800" /><path d="M1 20Q-1 14 9 6T21 2q1 2-2 5" stroke="#f5c430" strokeWidth="1.800" /></svg>,
  <RemoteFolder />,
  <svg width="22" height="22" viewBox="0 0 22 22"><path d="M3 3l4-1 2 3 5 5 4 8-3 3-7-8-5-4z" fill="#222" stroke="#ddd" /><path d="M7 7l9 11" stroke="#ccc" strokeWidth="3" /><path d="M1 7h3M13 3h3M17 8h3M3 14h3M7 18h3M16 14h4" stroke="#e8e000" strokeWidth="2.400" /></svg>,
  <DbTool s={21} tool="#1a78c8" />,
  <svg width="20" height="21" viewBox="0 0 20 21"><path d="M1 1h15v19H1z" fill="#f2f5e9" /><path d="M1 9h15v11H1z" fill="#8fd04a" /><path d="M1 14h15v6H1z" fill="#4fa81f" /><path d="M4 5h2v6H4M8 8h4" stroke="#333" fill="none" /><path d="M19 2L10 15" stroke="#d89a2e" strokeWidth="2.500" /></svg>,
  <svg width="22" height="22" viewBox="0 0 22 22"><circle cx="11" cy="11" r="10" fill="#dfe4e8" stroke="#a8b0b8" strokeWidth="1.500" /><path d="M11 11V2a9 9 0 0 1 9 9z" fill="#f0cf85" /><path d="M11 4v7h6" fill="none" stroke="#445" strokeWidth="1.300" /></svg>,
  <Xampp s={21} />,
  <svg width="22" height="22" viewBox="0 0 22 22"><path d="M1 0h9v19H1z" fill="#35a0de" /><path d="M3 3h5M3 6h5" stroke="#fff" /><rect x="6" y="12" width="16" height="9" rx="1" fill="#9db4c6" stroke="#dce6ee" /><path d="M8 16h12" stroke="#fff" /></svg>,
  <svg width="21" height="21" viewBox="0 0 21 21"><path d="M7 2l13 1-5 17-14-3z" fill="#d8ecf2" /><path d="M7 3l10 1-4 14-11-2z" fill="#6fb3c7" /><path d="M8 4l8 1-2 6-7 3z" fill="#a3d6e2" /></svg>,
  <ChromeLogo s={22} />,
  <svg width="20" height="17" viewBox="0 0 20 17"><rect x=".5" y=".5" width="19" height="16" fill="#050505" stroke="#888" /><path d="M1 2h18" stroke="#bbb" strokeWidth="2" /><path d="M3 6h2M6 6v2M8 6l1 2M10 8h3" stroke="#ddd" /></svg>,
  <svg width="20" height="22" viewBox="0 0 20 22"><path d="M8 1q1 6 4 10t0 9q-4 3-8 0t0-9Q7 7 8 1z" fill="#b5121b" stroke="#e06a70" strokeWidth=".7" /><path d="M15 0v8M11 4h8" stroke="#e23b45" strokeWidth="2.500" /></svg>,
];

function RemoteTaskbar() {
  return (
    <div className="flex h-[36px] shrink-0 items-center border-t border-[#55585a] bg-[#0f100e] text-[11.500px] leading-none text-white">
      <Slot w={43}><WinLogo s={14} c="#fff" /></Slot>
      <Slot w={42}><Search s={15} /></Slot>
      <Slot w={43}>
        <svg width="15" height="14" viewBox="0 0 15 14" fill="none" stroke="#e8e8e8"><path d="M.5 0v2.500h9V0M.5 14v-2.500h9V14M1.500 4.500h8v5h-8zM13 0v14M11.500 5h3" /></svg>
      </Slot>
      <div className="ml-[2px] flex h-full">
        {REMOTE_APPS.map((icon, i) => (
          <div key={i} className="flex h-full w-[43.700px] shrink-0 flex-col items-center justify-between pt-[6px]">
            <div className="flex h-[22px] items-center">{icon}</div>
            <div className="h-[2px] w-[36px] bg-[#76b5e8]" />
          </div>
        ))}
      </div>
      <div className="ml-auto flex h-full items-center">
        <Slot w={24}><Chevron up s={11} /></Slot>
        <Slot w={20}><Xampp s={14} /></Slot>
        <Slot w={22}><Monitor s={14} /></Slot>
        <Slot w={22}><svg width="16" height="13" viewBox="0 0 16 13" fill="none" stroke="#ddd"><path d="M1 4h2l3-3v10L3 8H1z" /><circle cx="11" cy="9" r="4" fill="#d32035" stroke="none" /><path d="M9.500 7.500l3 3M12.500 7.500l-3 3" stroke="#fff" /></svg></Slot>
        <Slot w={27}><svg width="15" height="15" viewBox="0 0 15 15" fill="none" stroke="#ddd" strokeWidth="1.200"><path d="M4 11L10 1l2 1.500L6 12l-3 1zM1 12q0-4 3-4M10 6q4-1 4 2l-2 2" /></svg></Slot>
        <div className="ml-[5px] flex w-[20px] flex-col items-center gap-[4px]"><Fit w={20}>ENG</Fit><Fit w={14}>GA</Fit></div>
        <div className="ml-[12px] flex w-[52px] flex-col items-center gap-[4px]"><Fit w={24}>11:08</Fit><Fit w={52}>24/02/2023</Fit></div>
        <Slot w={45}><svg width="15" height="15" viewBox="0 0 15 15" fill="none" stroke="#ddd" strokeWidth="1.200"><path d="M1 1h13v10H10l-2.500 3L5 11H1z" /></svg></Slot>
        <div className="ml-[2px] mr-[4px] h-full w-px bg-[#444]" />
      </div>
    </div>
  );
}

/* ---------- host taskbar ---------- */
function HostTaskbar() {
  const apps: [React.ReactNode, string][] = [
    [<svg width="24" height="23" viewBox="0 0 24 23"><rect x="6" width="18" height="16" fill="#f1f1f1" /><rect x="0" y="6" width="18" height="16" fill="#6f6a66" fillOpacity=".9" /><path d="M6 6h12v10H6z" fill="#b0adab" /></svg>, ""],
    [<svg width="24" height="24" viewBox="0 0 24 24"><path d="M12 0a12 12 0 1 1-6 22.400L1 24V12A12 12 0 0 1 12 0z" fill="#6c6fd0" /><rect x="5" y="8" width="9" height="9" rx="1.500" fill="#fff" /><path d="M15 11l4-3v9l-4-3z" fill="#fff" /></svg>, ""],
    [<Folder s={24} />, "dot"],
    [<svg width="25" height="25" viewBox="0 0 24 24"><defs><linearGradient id="eg" x1="0" x2="1"><stop offset="0" stopColor="#1b9de2" /><stop offset="1" stopColor="#5adf6b" /></linearGradient></defs><circle cx="12" cy="12" r="12" fill="#1574c4" /><path d="M0 11A12 12 0 0 1 24 11q0 6-6 6-4 0-4-2 2-2 1-5-2-4-7-3Q2 8 0 13z" fill="url(#eg)" /><path d="M8 10q-4 5 1 9 5 4 11 1-5 1-8-2-3-4 0-8z" fill="#0c4f99" /></svg>, ""],
    [<svg width="24" height="24" viewBox="0 0 24 24"><path d="M7 6V2q0-1.500 1.500-1.500h7Q17 .5 17 2v4" fill="none" stroke="#35b1ea" strokeWidth="1.600" /><path d="M1 5h22v15q0 3.500-3.500 3.500h-15Q1 23.500 1 20z" fill="#f5f5f5" /><path d="M7 9h4.500v4.500H7z" fill="#f04e24" /><path d="M12.500 9H17v4.500h-4.500z" fill="#7db700" /><path d="M7 14.500h4.500V19H7z" fill="#00a3ee" /><path d="M12.500 14.500H17V19h-4.500z" fill="#fdb900" /></svg>, ""],
    [<DbTool s={24} tool="#ef7d1a" />, "dot"],
    [<svg width="25" height="25" viewBox="0 0 24 24"><path d="M17 0l6 3v18l-6 3L7 14.500 3 18l-2-1 5-5-5-5 2-1 4 3.500z M17 7l-6.500 5 6.500 5z" fill="#2196e8" fillRule="evenodd" /></svg>, "dot"],
    [<span className="flex h-6 w-6 items-center justify-center rounded-full bg-[#31b84c] text-white ring-1 ring-white"><FaWhatsapp size={19} /></span>, "dot"],
    [<svg width="18" height="23" viewBox="0 0 18 23"><path d="M0 0h12l6 6v17H0z" fill="#f5f5f5" /><path d="M12 0v6h6z" fill="#bbb" /><rect x="4" y="8" width="10" height="10" fill="#2d86dc" /><path d="M4 18l5-6 5 6z" fill="#0c57a5" /></svg>, "dot"],
    [<ChromeLogo s={24} />, "active"],
  ];
  return (
    <div className="flex h-[48px] shrink-0 items-center bg-[linear-gradient(to_right,#241c33_0%,#281d3b_25%,#2e183f_36%,#35192f_41%,#38241f_47%,#3a2621_58%,#4a1418_66%,#4a1416_70%,#3f1811_80%,#38171a_94%,#321a20_100%)] text-[12px] leading-none text-white">
      <div className="flex w-[676px] items-center gap-[9px] pl-[21px]">
        <div className="h-[21px] w-[21px] rounded-full bg-[linear-gradient(135deg,#fcb92c,#ef7a12)]" />
        <div className="flex flex-col gap-[4px] pt-[2px]"><Fit w={24}>84°F</Fit><Fit w={34}>Sunny</Fit></div>
      </div>
      <svg width="24" height="24" viewBox="0 0 24 24"><defs><linearGradient id="w" x1="0" y1="0" x2="1" y2="1"><stop stopColor="#7fe9ff" /><stop offset="1" stopColor="#0794f5" /></linearGradient></defs><path d="M0 0h11.500v11.500H0zM12.500 0H24v11.500H12.500zM0 12.500h11.500V24H0zM12.500 12.500H24V24H12.500z" fill="url(#w)" /></svg>
      <div className="ml-[13px] flex h-[32px] w-[100px] items-center rounded-full border border-[#553a55] bg-[#442a40] pl-[21px]">
        <Search s={15} /><Fit w={36} className="ml-[5px] mt-[2px] text-[12.500px]">Search</Fit>
      </div>
      <div className="ml-[5.500px] flex">
        {apps.map(([icon, st], i) => (
          <div key={i} className={`relative flex h-10 w-[38px] flex-col items-center rounded-[4px] pt-[8px] ${i < 9 ? "mr-[6px]" : "border border-[#5b3d3a] bg-[#4e2a29] !pt-[7px]"}`}>
            <div className="flex h-6 items-center">{icon}</div>
            {st === "dot" && <div className="mt-[4px] h-[3px] w-[6px] rounded-full bg-[#a49a9c]" />}
            {st === "active" && <div className="mt-[4px] h-[3px] w-[16px] rounded-full bg-[#d9a0e6]" />}
            {i === 7 && <span className="absolute right-[2px] top-[3px] flex h-4 w-4 items-center justify-center rounded-full bg-[#d79be8] text-[11px] text-black">9</span>}
            {i === 9 && <span className="absolute right-[2px] top-[2px] flex h-4 w-4 items-center justify-center rounded-full bg-[#00897b] text-[10px]">C</span>}
          </div>
        ))}
      </div>
      <div className="ml-auto flex items-center pr-[20px]">
        <Slot w={40}><Chevron up s={13} /></Slot>
        <Slot w={24}><Monitor s={16} /></Slot>
        <Slot w={24}><Speaker /></Slot>
        <div className="ml-[11px] flex w-[55px] flex-col items-end gap-[4px]"><Fit w={40}>4:12 PM</Fit><Fit w={55}>2/24/2023</Fit></div>
        <span className="ml-[8px] flex h-4 w-4 items-center justify-center rounded-full bg-[#d79be8] text-[11px] text-black">6</span>
      </div>
    </div>
  );
}

export default function App() {
  return (
    <div className="flex h-[1080px] w-[1920px] flex-col overflow-hidden font-['Open_Sans','Noto_Sans',sans-serif]">
      <OuterTabs />
      <OuterToolbar />
      <div className="relative flex h-[961px] shrink-0 overflow-hidden bg-[#808080] pl-[106px]">
        <div className="relative flex w-[1708px] flex-col shadow-[0_0_12px_rgba(0,0,0,0.5)]">
          <RemoteChrome />
          <div className="flex h-[862px] shrink-0 overflow-hidden">
            <Sidebar />
            <WardPage />
            <div className="flex w-[15px] shrink-0 flex-col items-center bg-[#f1f1f1] text-[#666]">
              <svg className="mt-[6px]" width="7" height="5" viewBox="0 0 7 5"><path d="M0 5l3.500-5L7 5z" fill="#999" /></svg>
              <div className="mt-[4px] h-[771px] w-[12px] bg-[#c1c1c1]" />
              <svg className="mt-[66px]" width="7" height="5" viewBox="0 0 7 5"><path d="M0 0l3.500 5L7 0z" fill="#505050" /></svg>
            </div>
          </div>
          <RemoteTaskbar />
          <Toast />
          <OrangeWindow />
          <Dialog />
          <Watermark className="left-[220px] top-[198px]" />
          <Watermark className="left-[1073px] top-[198px]" />
          <Watermark className="left-[646px] top-[440px]" />
          <Watermark className="left-[220px] top-[682px]" />
          <Watermark className="left-[1073px] top-[682px]" />
        </div>
        <div className="absolute left-[1901px] top-[456px] flex h-[50px] w-[50px] items-center rounded-full bg-[#404040] pl-[11px] shadow-[0_0_12px_rgba(0,0,0,0.4)]">
          <svg width="10" height="16" viewBox="0 0 10 16" fill="none" stroke="#ccc" strokeWidth="2"><path d="M9 1L2 8l7 7" /></svg>
        </div>
      </div>
      <HostTaskbar />
    </div>
  );
}
